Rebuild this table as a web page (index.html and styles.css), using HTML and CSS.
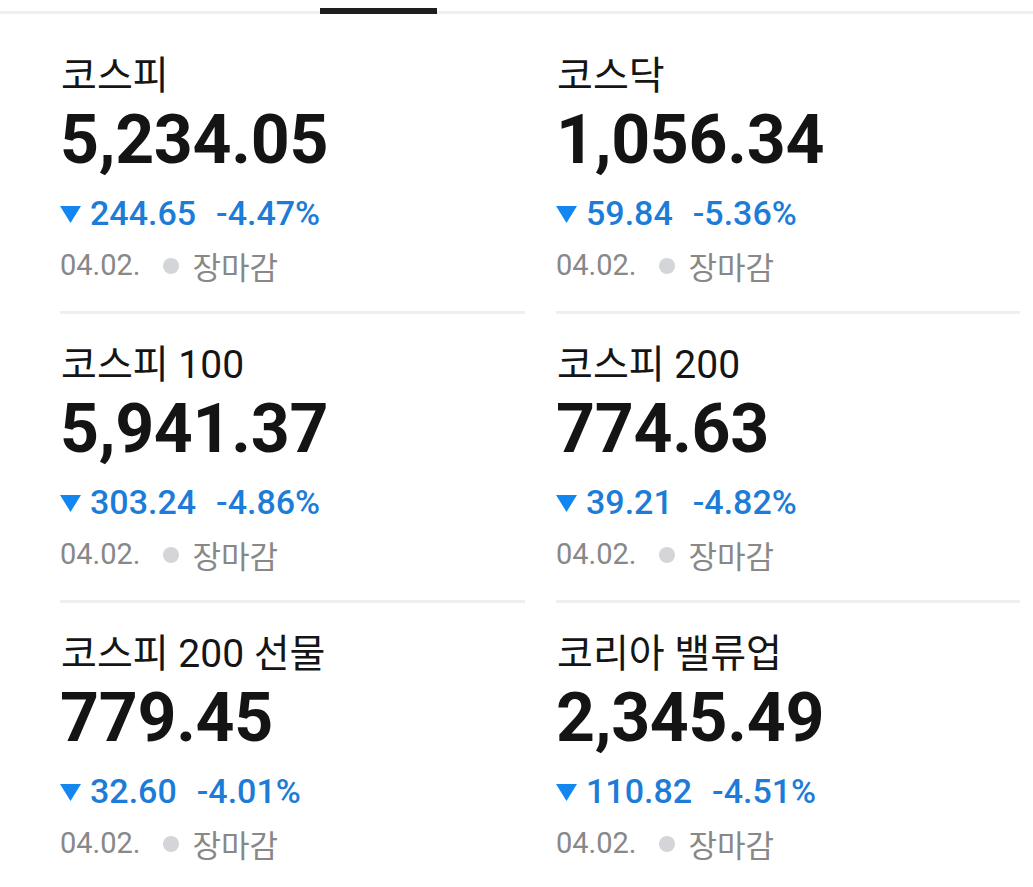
FILE: index.html
```html
<!DOCTYPE html>
<html lang="ko">
<head>
<meta charset="utf-8">
<link rel="stylesheet" href="styles.css">
</head>
<body>
<div class="tabbar"><div class="indicator"></div></div>
<div class="grid">
  <div class="cell">
    <div class="title">코스피</div>
    <div class="value">5,234.05</div>
    <div class="change"><svg class="tri" width="21" height="17" viewBox="0 0 20 16"><path d="M0 0H20L10 16Z"/></svg><span class="abs">244.65</span><span class="pct">-4.47%</span></div>
    <div class="date"><span>04.02.</span><span class="dot"></span><span class="status">장마감</span></div>
  </div>
  <div class="cell">
    <div class="title">코스닥</div>
    <div class="value">1,056.34</div>
    <div class="change"><svg class="tri" width="21" height="17" viewBox="0 0 20 16"><path d="M0 0H20L10 16Z"/></svg><span class="abs">59.84</span><span class="pct">-5.36%</span></div>
    <div class="date"><span>04.02.</span><span class="dot"></span><span class="status">장마감</span></div>
  </div>
  <div class="cell">
    <div class="title">코스피 100</div>
    <div class="value">5,941.37</div>
    <div class="change"><svg class="tri" width="21" height="17" viewBox="0 0 20 16"><path d="M0 0H20L10 16Z"/></svg><span class="abs">303.24</span><span class="pct">-4.86%</span></div>
    <div class="date"><span>04.02.</span><span class="dot"></span><span class="status">장마감</span></div>
  </div>
  <div class="cell">
    <div class="title">코스피 200</div>
    <div class="value">774.63</div>
    <div class="change"><svg class="tri" width="21" height="17" viewBox="0 0 20 16"><path d="M0 0H20L10 16Z"/></svg><span class="abs">39.21</span><span class="pct">-4.82%</span></div>
    <div class="date"><span>04.02.</span><span class="dot"></span><span class="status">장마감</span></div>
  </div>
  <div class="cell">
    <div class="title">코스피 200 선물</div>
    <div class="value">779.45</div>
    <div class="change"><svg class="tri" width="21" height="17" viewBox="0 0 20 16"><path d="M0 0H20L10 16Z"/></svg><span class="abs">32.60</span><span class="pct">-4.01%</span></div>
    <div class="date"><span>04.02.</span><span class="dot"></span><span class="status">장마감</span></div>
  </div>
  <div class="cell">
    <div class="title">코리아 밸류업</div>
    <div class="value">2,345.49</div>
    <div class="change"><svg class="tri" width="21" height="17" viewBox="0 0 20 16"><path d="M0 0H20L10 16Z"/></svg><span class="abs">110.82</span><span class="pct">-4.51%</span></div>
    <div class="date"><span>04.02.</span><span class="dot"></span><span class="status">장마감</span></div>
  </div>
</div>
</body>
</html>
```

FILE: styles.css
```css
* { box-sizing: border-box; }
html, body { margin: 0; padding: 0; background: #fff; }
body {
  font-family: Roboto, "Noto Sans CJK KR", sans-serif;
  color: #141414;
  width: 1033px;
  height: 887px;
  overflow: hidden;
}
.tabbar {
  height: 14px;
  border-bottom: 3px solid #f0f0f0;
  position: relative;
}
.indicator {
  position: absolute;
  left: 320px;
  top: 8px;
  width: 117px;
  height: 6px;
  background: #1e1e1e;
}
.grid {
  display: grid;
  grid-template-columns: 465px 464px;
  column-gap: 31px;
  padding: 11px 0 0 60px;
}
.cell {
  padding: 27px 0 26px;
  border-bottom: 3px solid #efefef;
}
.title {
  font-size: 39px;
  line-height: 48px;
  color: #151515;
  padding-left: 1px;
}
.value {
  font-size: 68px;
  font-weight: 700;
  line-height: 80px;
  color: #141414;
  letter-spacing: -0.3px;
}
.change {
  display: flex;
  align-items: center;
  margin-top: 13px;
  height: 40px;
  font-size: 34px;
  font-weight: 500;
  color: #1c7cd8;
}
.tri {
  flex: none;
  fill: #1287f0;
  margin: 2px 9px 0 0;
}
.pct { margin-left: 20px; }
.date {
  display: flex;
  align-items: center;
  margin-top: 12px;
  height: 40px;
  font-size: 29px;
  color: #888;
}
.dot {
  width: 16px;
  height: 16px;
  border-radius: 50%;
  background: #d3d5d9;
  margin: 2px 14px 0 22px;
}
.status { font-size: 31px; }
```
